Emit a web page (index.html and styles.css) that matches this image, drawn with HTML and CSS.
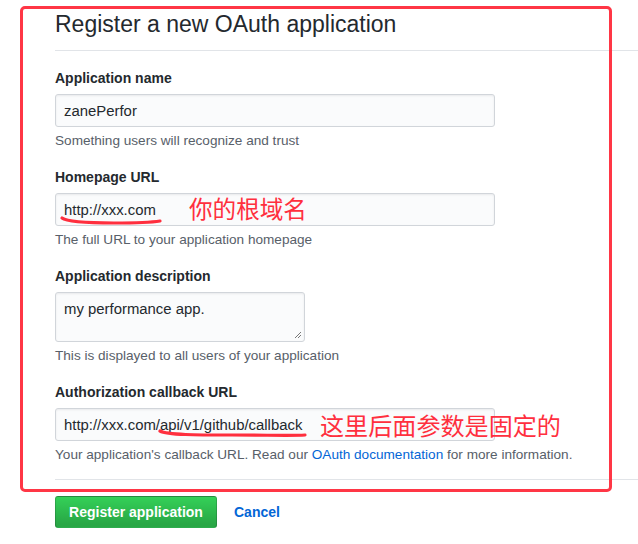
FILE: index.html
```html
<!DOCTYPE html>
<html>
<head>
<meta charset="utf-8">
<link rel="stylesheet" href="styles.css">
</head>
<body>
<div class="page">
  <h2 class="title">Register a new OAuth application</h2>
  <form class="form">
    <div class="group">
      <label class="label">Application name</label>
      <div class="input">zanePerfor</div>
      <p class="note">Something users will recognize and trust</p>
    </div>
    <div class="group">
      <label class="label">Homepage URL</label>
      <div class="input">http://xxx.com</div>
      <p class="note">The full URL to your application homepage</p>
    </div>
    <div class="group">
      <label class="label">Application description</label>
      <div class="textarea">my performance app.
        <svg class="grip" width="8" height="8" viewBox="0 0 8 8"><path d="M1 7L7 1M4 7L7 4" stroke="#777" stroke-width="1"/></svg>
      </div>
      <p class="note">This is displayed to all users of your application</p>
    </div>
    <div class="group last">
      <label class="label">Authorization callback URL</label>
      <div class="input">http://xxx.com/api/v1/github/callback</div>
      <p class="note">Your application's callback URL. Read our <a class="link">OAuth documentation</a> for more information.</p>
    </div>
  </form>
  <div class="actions">
    <button class="btn">Register application</button>
    <a class="cancel">Cancel</a>
  </div>

  <div class="redbox"></div>
  <span class="anno anno1">你的根域名</span>
  <span class="anno anno2">这里后面参数是固定的</span>
  <svg class="stroke stroke1" width="110" height="12" viewBox="0 0 110 12"><path d="M3 3 C 8 7, 30 8, 55 8 C 80 8, 95 7, 101 6" fill="none" stroke="#ff2f3e" stroke-width="3.2" stroke-linecap="round"/></svg>
  <svg class="stroke stroke2" width="160" height="12" viewBox="0 0 160 12"><path d="M3 3 C 10 7, 40 7, 75 7 C 110 7, 135 8, 148 7" fill="none" stroke="#ff2f3e" stroke-width="3.2" stroke-linecap="round"/></svg>
</div>
</body>
</html>
```

FILE: styles.css
```css
* { box-sizing: border-box; }
html, body { margin: 0; padding: 0; background: #fff; }
body {
  font-family: "Liberation Sans", Arial, "Noto Sans CJK SC", sans-serif;
  color: #24292e;
  width: 638px;
  height: 544px;
  overflow: hidden;
}
.page {
  position: relative;
  padding: 9px 0 0 55px;
  height: 544px;
}
.title {
  margin: 0;
  font-weight: 400;
  font-size: 23px;
  line-height: 31px;
  padding-bottom: 10px;
  border-bottom: 1px solid #e1e4e8;
}
.form {
  margin: 17px 0 0;
  padding-bottom: 15px;
  border-bottom: 1px solid #e1e4e8;
}
.group { margin-bottom: 17px; }
.group.last { margin-bottom: 0; }
.label {
  display: block;
  font-weight: 700;
  font-size: 14px;
  line-height: 20px;
  margin-bottom: 6px;
}
.input, .textarea {
  width: 440px;
  height: 33px;
  background: #fafbfc;
  border: 1px solid #d1d5da;
  border-radius: 3px;
  box-shadow: inset 0 1px 2px rgba(27,31,35,0.075);
  font-size: 14.9px;
  line-height: 20px;
  padding: 6px 8px;
  color: #24292e;
}
.textarea {
  position: relative;
  width: 250px;
  height: 50px;
}
.grip { position: absolute; right: 2px; bottom: 2px; }
.note {
  margin: 5px 0 0;
  font-size: 13.6px;
  line-height: 18px;
  color: #586069;
}
.link { color: #0366d6; }
.actions {
  display: flex;
  align-items: center;
  gap: 17px;
  margin-top: 16px;
}
.btn {
  height: 32px;
  padding: 0 12px;
  border: 1px solid rgba(27,31,35,0.2);
  border-radius: 3px;
  background: linear-gradient(#34d058, #28a745 90%);
  color: #fff;
  font-family: inherit;
  font-weight: 700;
  font-size: 14px;
  width: 162px;
}
.cancel {
  color: #0366d6;
  font-weight: 700;
  font-size: 14px;
}
.redbox {
  position: absolute;
  left: 20px;
  top: 6px;
  width: 592px;
  height: 486px;
  border: 3px solid #ff3645;
  border-radius: 5px;
}
.anno {
  position: absolute;
  color: #ff2f3e;
  font-family: "Noto Sans CJK SC", sans-serif;
  line-height: 26px;
}
.anno1 { left: 189px; top: 195px; font-size: 23.6px; }
.anno2 { left: 320px; top: 412px; font-size: 24.1px; }
.stroke { position: absolute; }
.stroke1 { left: 59px; top: 215px; }
.stroke2 { left: 157px; top: 428px; }
```
